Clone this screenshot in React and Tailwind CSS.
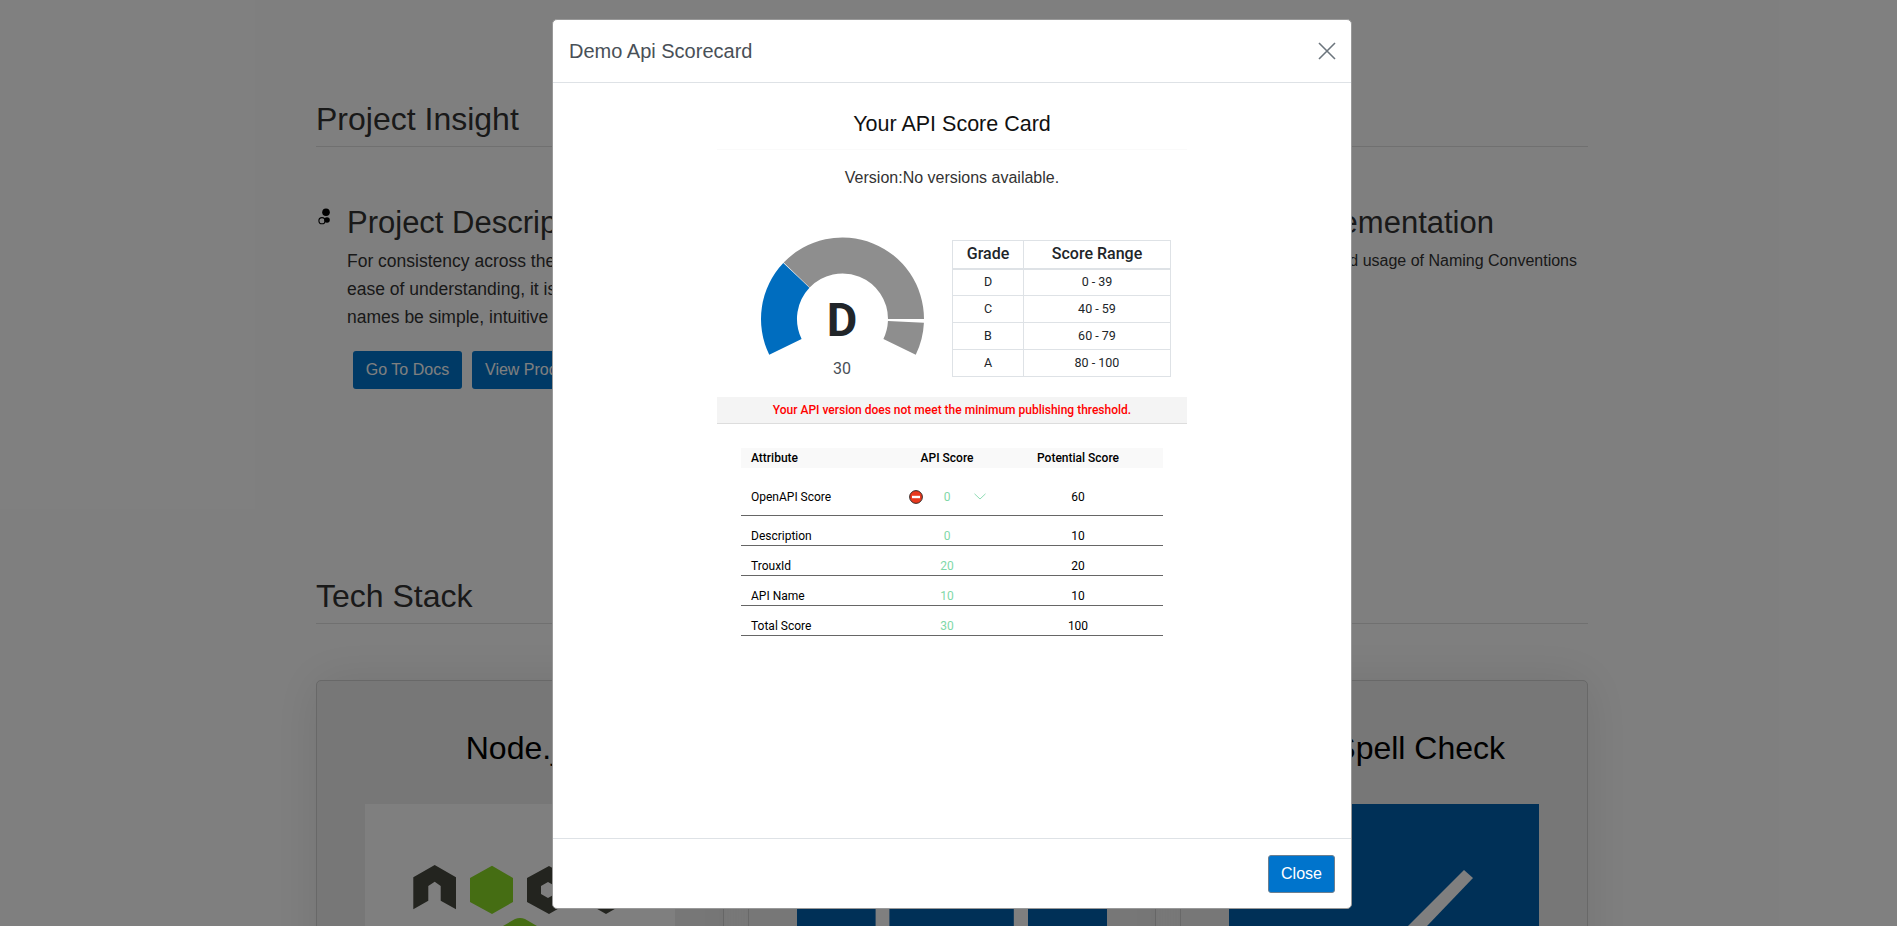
import React from 'react';

// polar helper for the gauge, angles in degrees counter-clockwise from +x
const pt = (r, a) => {
  const t = (a * Math.PI) / 180;
  return `${(90.5 + r * Math.cos(t)).toFixed(2)} ${(90 - r * Math.sin(t)).toFixed(2)}`;
};

const sector = (from, to, outer = 81.5, inner = 45.5) => {
  const large = Math.abs(from - to) > 180 ? 1 : 0;
  return `M${pt(outer, from)} A${outer} ${outer} 0 ${large} 1 ${pt(outer, to)} L${pt(inner, to)} A${inner} ${inner} 0 ${large} 0 ${pt(inner, from)} Z`;
};

const grades = [
  ['D', '0 - 39'],
  ['C', '40 - 59'],
  ['B', '60 - 79'],
  ['A', '80 - 100'],
];

const scores = [
  ['Description', '0', '10'],
  ['TrouxId', '20', '20'],
  ['API Name', '10', '10'],
  ['Total Score', '30', '100'],
];

function Gauge() {
  return (
    <div className="relative w-[180px] h-[150px] shrink-0">
      <svg width="180" height="150" viewBox="0 0 180 150">
        <path d={sector(206, 136.6)} fill="#006dbf" />
        <path d={sector(136.2, 0)} fill="#8e8e8e" />
        <path d={sector(-2.6, -26)} fill="#8e8e8e" />
      </svg>
      <span className="absolute left-0 right-0 top-[63px] text-center text-[47px] leading-[56px] font-bold text-[#212529]">D</span>
      <span className="absolute left-0 right-0 top-[130px] text-center text-[16px] leading-[20px] text-[#495057]">30</span>
    </div>
  );
}

function GradeTable() {
  return (
    <table className="w-[219px] table-fixed border-collapse text-[#212529] mt-[11px]">
      <thead>
        <tr className="h-[28px]">
          <th className="w-[71px] border border-b-2 border-[#dee2e6] text-[16px] font-medium">Grade</th>
          <th className="border border-b-2 border-[#dee2e6] text-[16px] font-medium">Score Range</th>
        </tr>
      </thead>
      <tbody>
        {grades.map(([g, r]) => (
          <tr key={g} className="h-[27px]">
            <td className="border border-[#dee2e6] text-center text-[12.5px]">{g}</td>
            <td className="border border-[#dee2e6] text-center text-[12.5px]">{r}</td>
          </tr>
        ))}
      </tbody>
    </table>
  );
}

function ScoreCard() {
  return (
    <div className="ml-[164px] w-[470px] mt-[17px] font-[Roboto,sans-serif]">
      <div className="h-[50px] border-b border-[#fafafa] flex items-start justify-center pt-[10px] font-['Liberation_Sans',sans-serif] text-[21.5px] leading-[28px] text-[#111]">
        Your API Score Card
      </div>
      <div className="mt-[18px] text-center font-['Liberation_Sans',sans-serif] text-[16px] leading-[20px] text-[#333]">Version:No versions available.</div>

      <div className="mt-[41px] flex items-start pl-[35px]">
        <Gauge />
        <div className="ml-[20px]"><GradeTable /></div>
      </div>

      <div className="mt-[18px] h-[27px] bg-[#f4f4f4] border-b border-[#dddddd] flex items-center justify-center text-[12px] font-medium text-[#ff0000]">
        Your API version does not meet the minimum publishing threshold.
      </div>

      <div className="ml-[24px] w-[422px] mt-[24px] text-[12px] text-black">
        <div className="grid grid-cols-[160px_92px_170px] h-[20px] items-center bg-[#f9f9f9] font-medium">
          <span className="pl-[10px]">Attribute</span>
          <span className="text-center">API Score</span>
          <span className="text-center">Potential Score</span>
        </div>
        <div className="grid grid-cols-[160px_92px_170px] h-[48px] pt-[10px] items-center border-b border-[#666]">
          <span className="pl-[10px]">OpenAPI Score</span>
          <div className="flex items-center">
            <svg className="ml-[8px] shrink-0" width="14" height="14" viewBox="0 0 14 14">
              <circle cx="7" cy="7" r="6.4" fill="#e8391e" stroke="#222" strokeWidth="0.9" />
              <rect x="3" y="5.8" width="8" height="2.4" fill="#fff" />
            </svg>
            <span className="w-[48px] text-center text-[#7fd8a8]">0</span>
            <svg className="ml-[3px] shrink-0" width="12" height="7" viewBox="0 0 12 7" fill="none">
              <path d="M0.5 0.8 L6 6 L11.5 0.8" stroke="#8fdcb5" strokeWidth="1" />
            </svg>
          </div>
          <span className="text-center">60</span>
        </div>
        {scores.map(([name, api, potential]) => (
          <div key={name} className="grid grid-cols-[160px_92px_170px] h-[30px] items-end border-b border-[#666] leading-[18px]">
            <span className="pl-[10px]">{name}</span>
            <span className="text-center text-[#7fd8a8]">{api}</span>
            <span className="text-center">{potential}</span>
          </div>
        ))}
      </div>
    </div>
  );
}

function TechCard({ title, className, children }) {
  return (
    <div className="h-[400px] rounded-[5px] border border-[#d0d0d0] bg-[#eeeeee] shadow-[0_0_50px_rgba(0,0,0,0.1)] flex flex-col items-center pt-[49px]">
      <div className={`text-[32px] leading-[36px] text-black whitespace-nowrap ${className ?? ''}`}>{title}</div>
      <div className="mt-[38px]">{children}</div>
    </div>
  );
}

function Background() {
  return (
    <div className="ml-[316px] w-[1272px] pt-[101px] font-['Liberation_Sans',sans-serif] text-[#333]">
      <h2 className="text-[32px] leading-[36px] pb-[9px] border-b border-[#e0e0e0]">Project Insight</h2>

      <div className="mt-[57px] flex justify-between h-[243px]">
        <div className="flex">
          <svg className="w-[16px] h-[23px] mt-[-1px] shrink-0" viewBox="0 0 16 23">
            <circle cx="10" cy="9.3" r="3.8" fill="#000" />
            <circle cx="6" cy="17.7" r="3.1" fill="none" stroke="#000" strokeWidth="1.1" />
            <circle cx="11" cy="17" r="2.8" fill="#000" />
          </svg>
          <div className="ml-[15px]">
            <h3 className="mt-[1px] text-[31px] leading-[36px]">Project Description</h3>
            <p className="mt-[6px] text-[17.5px] leading-[28px] whitespace-nowrap">
              For consistency across the organization and for<br />
              ease of understanding, it is recommended that API<br />
              names be simple, intuitive and consistent.
            </p>
            <div className="mt-[20px] ml-[6px] flex gap-[10px]">
              <span className="h-[38px] w-[109px] rounded-[3px] bg-[#0074cc] text-white text-[16px] flex items-center justify-center whitespace-nowrap">Go To Docs</span>
              <span className="h-[38px] px-[13px] rounded-[3px] bg-[#0074cc] text-white text-[16px] flex items-center whitespace-nowrap">View Product</span>
            </div>
          </div>
        </div>
        <div className="text-right mr-[11px]">
          <h3 className="mt-[1px] text-[31px] leading-[36px] mr-[83px]">Naming Implementation</h3>
          <p className="mt-[6px] text-[16px] leading-[27px]">Adoption and usage of Naming Conventions</p>
        </div>
      </div>

      <h2 className="mt-[131px] text-[32px] leading-[36px] pb-[9px] border-b border-[#e0e0e0]">Tech Stack</h2>

      <div className="mt-[56px] grid grid-cols-3 gap-[24px]">
        <TechCard title="Node.js">
          <svg className="bg-white" width="310" height="260" viewBox="0 0 310 260">
            <path d="M69.7 61 L91 73.3 L91 105.3 L75.7 96.7 L75.7 82 L69.7 77.7 L63.3 82 L63.3 96.7 L48.3 105.3 L48.3 73.3 Z" fill="#46483e" />
            <path d="M127 61.7 L148 74 L148 98 L127 110 L105 98 L105 74 Z" fill="#8ada26" />
            <path d="M184 62 L205 74 L205 98 L184 110 L162 98 L162 74 Z M183 78 L176 82 L176 90 L183 94 L190 90 L190 82 Z" fill="#46483e" fillRule="evenodd" />
            <path d="M241 62 L262 74 L262 98 L241 110 L220 98 L220 74 Z" fill="#46483e" />
            <path d="M150 115 Q155 113 160 115 L172 122 L172 135 L138 135 L138 122 Z" fill="#8ada26" />
          </svg>
        </TechCard>
        <TechCard title="Prettier">
          <svg className="bg-[#0060ae]" width="310" height="260" viewBox="0 0 310 260">
            <rect x="78.6" y="60" width="13.8" height="200" fill="#ffffff" />
            <rect x="216.8" y="60" width="14.2" height="200" fill="#ffffff" />
          </svg>
        </TechCard>
        <TechCard title="Code Spell Check" className="pr-[14px]">
          <svg className="bg-[#0060ae]" width="310" height="260" viewBox="0 0 310 260">
            <path d="M235 66 L244 74 L198 122 L179 122 Z" fill="#ffffff" />
          </svg>
        </TechCard>
      </div>
    </div>
  );
}

export default function App() {
  return (
    <div className="relative h-screen overflow-hidden bg-white">
      <Background />

      {/* Modal */}
      <div className="absolute inset-0 bg-black/50 pt-[19px] pl-[552px]">
        <div className="w-[800px] h-[890px] bg-white rounded-[5px] border border-[#999] flex flex-col font-['Liberation_Sans',sans-serif]">
          <div className="h-[63px] shrink-0 border-b border-[#dee2e6] flex items-center justify-between pl-[16px] pr-[15px]">
            <span className="text-[20px] text-[#495057]">Demo Api Scorecard</span>
            <svg width="18" height="18" viewBox="0 0 18 18" fill="none">
              <path d="M1 1 L17 17 M17 1 L1 17" stroke="#6c757d" strokeWidth="1.6" />
            </svg>
          </div>
          <div className="flex-1 min-h-0">
            <ScoreCard />
          </div>
          <div className="h-[70px] shrink-0 border-t border-[#dee2e6] flex items-center justify-end pr-[16px]">
            <span className="w-[67px] h-[38px] rounded-[3px] bg-[#0074cc] border border-[#6c7f90] text-white text-[16px] flex items-center justify-center">Close</span>
          </div>
        </div>
      </div>
    </div>
  );
}
